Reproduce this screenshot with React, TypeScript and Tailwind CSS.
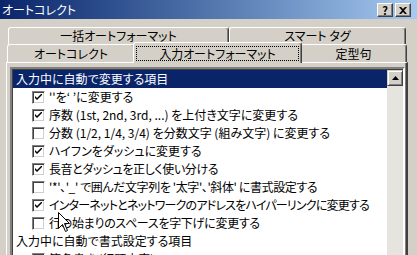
import React from 'react';

const FONT = "font-['Noto_Sans_CJK_JP','Liberation_Sans',sans-serif] [font-feature-settings:'palt']";

const rows = [
  { label: "''を‘ ’に変更する", checked: true, fit: '' },
  { label: '序数 (1st, 2nd, 3rd, ...) を上付き文字に変更する', checked: true, fit: '' },
  { label: '分数 (1/2, 1/4, 3/4) を分数文字 (組み文字) に変更する', checked: false, fit: '' },
  { label: 'ハイフンをダッシュに変更する', checked: true, fit: '' },
  { label: '長音とダッシュを正しく使い分ける', checked: true, fit: 'tracking-[-0.4px]' },
  { label: "'*'、'_' で囲んだ文字列を '太字'、'斜体' に書式設定する", checked: false, fit: 'tracking-[-0.4px]' },
  { label: 'インターネットとネットワークのアドレスをハイパーリンクに変更する', checked: true, fit: 'tracking-[-0.8px]' },
  { label: '行の始まりのスペースを字下げに変更する', checked: false, fit: 'tracking-[-0.3px]' },
];

const Checkbox = ({ checked }: { checked: boolean }) => (
  <div className="w-[13px] h-[13px] shrink-0 bg-white border border-t-[#808080] border-l-[#808080] border-r-white border-b-white shadow-[inset_1px_1px_#404040,inset_-1px_-1px_#d4d0c8] flex items-center justify-center">
    {checked && (
      <svg width="7" height="7" viewBox="0 0 7 7">
        <path d="M0 2 L0 4 L2 6 L7 1 L7 -1 L2 4 Z" fill="#000" />
      </svg>
    )}
  </div>
);

const Row = ({ label, checked, fit = '' }: { label: string; checked: boolean; fit?: string }) => (
  <div className="h-[18px] shrink-0 flex items-center pl-[19px] gap-[4px] whitespace-nowrap text-black">
    <Checkbox checked={checked} />
    <span className={fit}>{label}</span>
  </div>
);

const Tab = ({ label, className }: { label: string; className: string }) => (
  <div
    className={`flex items-center justify-center bg-[#d4d0c8] border-t border-l border-r border-t-white border-l-white border-r-[#404040] rounded-t-[3px] shadow-[inset_-1px_0_#808080] ${className}`}
  >
    {label}
  </div>
);

const CaptionButton = ({ children }: { children: React.ReactNode }) => (
  <div className="w-[16px] h-[14px] bg-[#d4d0c8] border border-t-white border-l-white border-r-[#404040] border-b-[#404040] shadow-[inset_-1px_-1px_#808080] flex items-center justify-center text-black text-[11px] font-bold leading-none">
    {children}
  </div>
);

export default function App() {
  return (
    <div className={`relative w-[417px] h-[255px] overflow-hidden bg-[#d4d0c8] text-[12px] leading-none text-black ${FONT}`}>
      {/* title bar */}
      <div className="h-[19px] flex items-center justify-between bg-gradient-to-r from-[#0a246a] to-[#a6caf0] pl-[2px] pr-[6px]">
        <span className="text-white">オートコレクト</span>
        <div className="flex gap-[2px] pt-[1px]">
          <CaptionButton>?</CaptionButton>
          <CaptionButton>
            <svg width="8" height="7" viewBox="0 0 8 7">
              <path d="M0 0 L2 0 L4 2 L6 0 L8 0 L5 3.5 L8 7 L6 7 L4 5 L2 7 L0 7 L3 3.5 Z" fill="#000" />
            </svg>
          </CaptionButton>
        </div>
      </div>

      {/* tabs */}
      <div className="pt-[8px] pl-[6px]">
        <div className="flex h-[17px] ml-[2px]">
          <Tab label="一括オートフォーマット" className="w-[221px] h-[17px]" />
          <Tab label="スマート タグ" className="w-[177px] h-[17px]" />
        </div>
        <div className="flex items-end h-[18px] ml-[1px]">
          <Tab label="オートコレクト" className="w-[128px] h-[18px]" />
          <div className="relative z-10 -mx-[2px] -mb-[1px] w-[169px] h-[21px] bg-[#d4d0c8] border-t border-l border-r border-t-white border-l-white border-r-[#404040] rounded-t-[3px] shadow-[inset_-1px_0_#808080] flex items-start justify-center pt-[3px] px-[2px]">
            <div className="w-full h-[15px] border border-dotted border-black flex items-center justify-center">
              入力オートフォーマット
            </div>
          </div>
          <Tab label="定型句" className="w-[107px] h-[18px]" />
        </div>

        {/* panel */}
        <div className="w-[402px] h-[200px] border-t border-l border-r-2 border-t-white border-l-white border-r-[#404040] shadow-[inset_-1px_0_#808080] pt-[4px] pl-[3px]">
          <div className="w-[395px] h-[200px] border-2 border-t-[#808080] border-l-[#808080] border-r-white border-b-white shadow-[inset_1px_1px_#404040] bg-white flex">
            <div className="flex-1 flex flex-col pt-px pl-px">
              <div className="h-[18px] shrink-0 flex items-center pl-[3px] bg-[#0a246a] text-white">
                入力中に自動で変更する項目
              </div>
              {rows.map((r) => (
                <Row key={r.label} label={r.label} checked={r.checked} fit={r.fit} />
              ))}
              <div className="h-[18px] shrink-0 flex items-center pl-[3px]">入力中に自動で書式設定する項目</div>
              <Row label="箇条書き (行頭文字)" checked={true} />
            </div>
            {/* scrollbar */}
            <div className="w-[16px] flex flex-col bg-[#e6e4df] mt-px">
              <div className="h-[16px] shrink-0 bg-[#d4d0c8] border border-t-[#d4d0c8] border-l-[#d4d0c8] border-r-[#404040] border-b-[#404040] shadow-[inset_1px_1px_white,inset_-1px_-1px_#808080] flex items-center justify-center">
                <svg width="7" height="4" viewBox="0 0 7 4">
                  <path d="M3.5 0 L7 4 L0 4 Z" fill="#000" />
                </svg>
              </div>
            </div>
          </div>
        </div>
      </div>

      {/* mouse pointer */}
      <svg className="absolute left-[58px] top-[212px]" width="13" height="21" viewBox="0 0 13 21">
        <path d="M0.5 0.5 L0.5 16.5 L4.5 12.5 L7.5 19.5 L9.5 18.5 L6.5 11.5 L11.5 11.5 Z" fill="#fff" stroke="#000" strokeWidth="1" />
      </svg>
    </div>
  );
}
